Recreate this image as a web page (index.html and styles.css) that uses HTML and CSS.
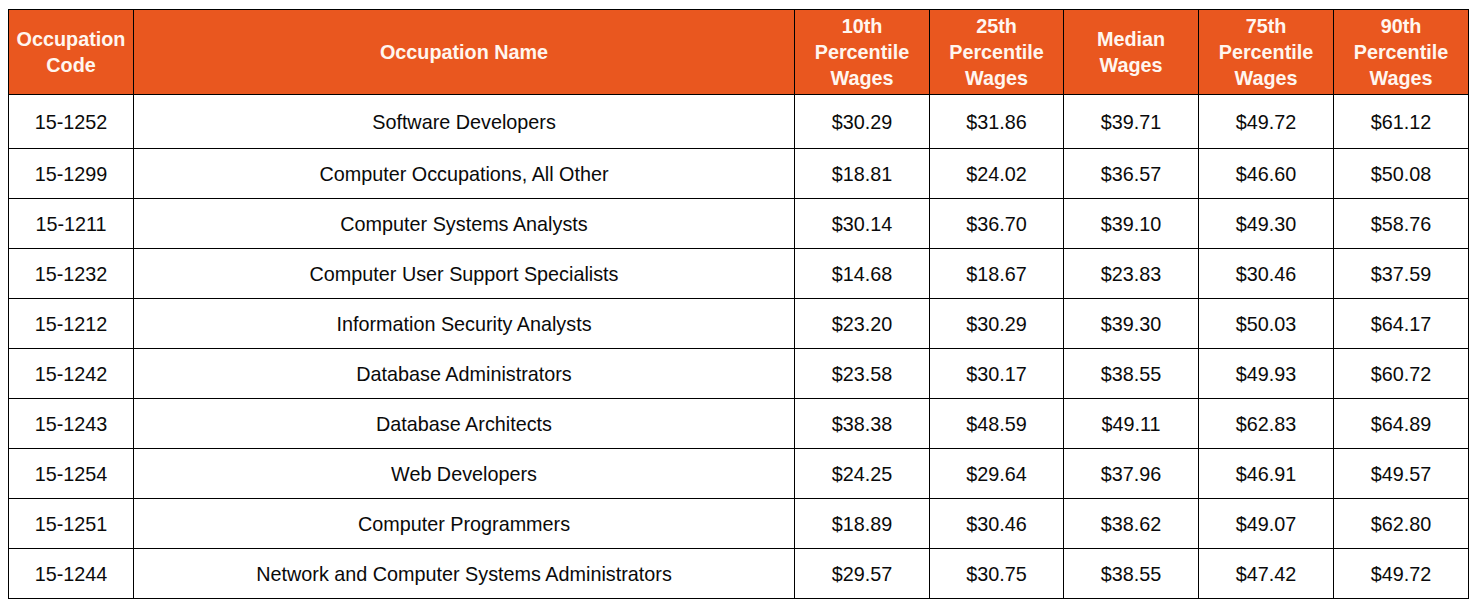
FILE: index.html
```html
<!DOCTYPE html>
<html lang="en">
<head>
<meta charset="utf-8">
<title>Occupation Wages</title>
<link rel="stylesheet" href="styles.css">
</head>
<body>
<table class="wages">
  <colgroup>
    <col class="c-code">
    <col class="c-name">
    <col class="c-p10">
    <col class="c-p25">
    <col class="c-med">
    <col class="c-p75">
    <col class="c-p90">
  </colgroup>
  <thead>
    <tr>
      <th>Occupation<br>Code</th>
      <th>Occupation Name</th>
      <th>10th<br>Percentile<br>Wages</th>
      <th>25th<br>Percentile<br>Wages</th>
      <th>Median<br>Wages</th>
      <th>75th<br>Percentile<br>Wages</th>
      <th>90th<br>Percentile<br>Wages</th>
    </tr>
  </thead>
  <tbody>
    <tr class="first"><td>15-1252</td><td>Software Developers</td><td>$30.29</td><td>$31.86</td><td>$39.71</td><td>$49.72</td><td>$61.12</td></tr>
    <tr><td>15-1299</td><td>Computer Occupations, All Other</td><td>$18.81</td><td>$24.02</td><td>$36.57</td><td>$46.60</td><td>$50.08</td></tr>
    <tr><td>15-1211</td><td>Computer Systems Analysts</td><td>$30.14</td><td>$36.70</td><td>$39.10</td><td>$49.30</td><td>$58.76</td></tr>
    <tr><td>15-1232</td><td>Computer User Support Specialists</td><td>$14.68</td><td>$18.67</td><td>$23.83</td><td>$30.46</td><td>$37.59</td></tr>
    <tr><td>15-1212</td><td>Information Security Analysts</td><td>$23.20</td><td>$30.29</td><td>$39.30</td><td>$50.03</td><td>$64.17</td></tr>
    <tr><td>15-1242</td><td>Database Administrators</td><td>$23.58</td><td>$30.17</td><td>$38.55</td><td>$49.93</td><td>$60.72</td></tr>
    <tr><td>15-1243</td><td>Database Architects</td><td>$38.38</td><td>$48.59</td><td>$49.11</td><td>$62.83</td><td>$64.89</td></tr>
    <tr><td>15-1254</td><td>Web Developers</td><td>$24.25</td><td>$29.64</td><td>$37.96</td><td>$46.91</td><td>$49.57</td></tr>
    <tr><td>15-1251</td><td>Computer Programmers</td><td>$18.89</td><td>$30.46</td><td>$38.62</td><td>$49.07</td><td>$62.80</td></tr>
    <tr><td>15-1244</td><td>Network and Computer Systems Administrators</td><td>$29.57</td><td>$30.75</td><td>$38.55</td><td>$47.42</td><td>$49.72</td></tr>
  </tbody>
</table>
</body>
</html>
```

FILE: styles.css
```css
html, body {
  background: #ffffff;
}
body {
  margin: 9px 8px;
  font-family: "Liberation Sans", Arial, sans-serif;
  color: #0a0a0a;
}
.wages {
  border-collapse: collapse;
  table-layout: fixed;
  width: 1460px;
  font-size: 19.8px;
}
.c-code { width: 125px; }
.c-name { width: 661px; }
.c-p10 { width: 135px; }
.c-p25 { width: 134px; }
.c-med { width: 135px; }
.c-p75 { width: 135px; }
.c-p90 { width: 135px; }
.wages th,
.wages td {
  border: 1px solid #000000;
  padding: 0;
  text-align: center;
  vertical-align: middle;
}
.wages th {
  background: #e9571f;
  color: #fff6ef;
  font-weight: bold;
  line-height: 26px;
  height: 84px;
}
.wages td {
  height: 49px;
  line-height: 22px;
}
.wages tr.first td {
  height: 53px;
}
```
